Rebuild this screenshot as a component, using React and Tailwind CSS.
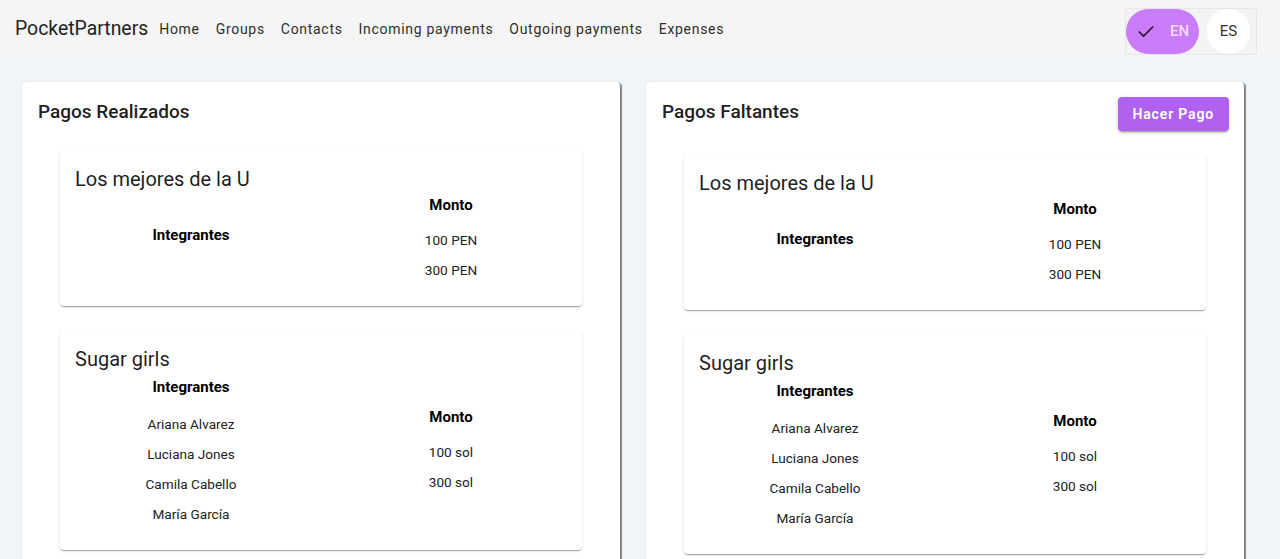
import { Check } from 'lucide-react'

const navLinks = ['Home', 'Groups', 'Contacts', 'Incoming payments', 'Outgoing payments', 'Expenses']

const groups = [
  {
    name: 'Los mejores de la U',
    members: [],
    amounts: ['100 PEN', '300 PEN'],
  },
  {
    name: 'Sugar girls',
    members: ['Ariana Alvarez', 'Luciana Jones', 'Camila Cabello', 'María García'],
    amounts: ['100 sol', '300 sol'],
  },
]

function GroupCard({ group }) {
  return (
    <div className="bg-white rounded-[4px] px-[15px] pt-4 pb-[21px] shadow-[0_2px_1px_-1px_rgba(0,0,0,0.2),0_1px_1px_0_rgba(0,0,0,0.14),0_1px_3px_0_rgba(0,0,0,0.12)]">
      <h3 className="text-[20px] leading-7 text-black/90">{group.name}</h3>
      <div className="grid grid-cols-2 gap-7 items-center">
        <div className="flex flex-col items-center pt-[2px]">
          <div className="h-6 leading-6 text-[15px] font-bold text-black">Integrantes</div>
          <div className="mt-[10px] flex flex-col">
            {group.members.map(m => (
              <div key={m} className="h-[30px] leading-[30px] text-[13.6px] text-[#222] text-center">{m}</div>
            ))}
          </div>
        </div>
        <div className="flex flex-col items-center">
          <div className="h-6 leading-6 text-[15px] font-bold text-black">Monto</div>
          <div className="mt-2 flex flex-col">
            {group.amounts.map(a => (
              <div key={a} className="h-[30px] leading-[30px] text-[13.6px] text-[#222] text-center">{a}</div>
            ))}
          </div>
        </div>
      </div>
    </div>
  )
}

function Panel({ title, action }) {
  return (
    <div className="flex-1 bg-white rounded-[4px] pt-[15px] pb-6 shadow-[2px_1px_1px_rgba(0,0,0,0.45),0_0_2px_rgba(0,0,0,0.12)]">
      <div className="flex items-start justify-between pl-4 pr-[15px]">
        <h2 className="text-[19px] leading-[30px] font-medium text-black/90">{title}</h2>
        {action}
      </div>
      <div className="mt-[22px] px-[38px] flex flex-col gap-[23px]">
        {groups.map(g => <GroupCard key={g.name} group={g} />)}
      </div>
    </div>
  )
}

export default function App() {
  return (
    <div className="min-h-screen bg-[#f1f4f8] font-['Roboto',sans-serif] text-black">
      <header className="h-[57px] bg-[#f5f5f5] flex items-start justify-between pl-[15px] pr-[23px]">
        <div className="flex items-center h-[57px]">
          <span className="text-[19.4px] text-[#222] mr-[3px]">PocketPartners</span>
          <nav className="flex items-center">
            {navLinks.map(link => (
              <a key={link} className="px-2 py-[6px] text-sm font-normal tracking-[0.05em] text-[#2e2e2e]">{link}</a>
            ))}
          </nav>
        </div>
        <div className="mt-2 flex items-center gap-2 border border-[#e6e6e6] rounded-[3px] bg-[#f3f3f3] pr-[6px] h-[47px]">
          <button className="h-[45px] w-[73px] rounded-full bg-[#c97cf7] flex items-center justify-center gap-[14px] text-[15px] text-[#f3dcff] font-medium">
            <Check size={20} strokeWidth={2} className="text-[#2a1236]" />
            EN
          </button>
          <button className="h-[45px] w-[43px] rounded-full bg-white flex items-center justify-center text-[15px] text-[#333]">
            ES
          </button>
        </div>
      </header>
      <main className="flex gap-[26px] pl-[22px] pr-[36px] pt-[25px] pb-6">
        <Panel title="Pagos Realizados" />
        <Panel
          title="Pagos Faltantes"
          action={
            <button className="h-[34px] px-[15px] rounded-[4px] bg-[#b061f0] text-white text-sm font-semibold tracking-[0.06em] shadow-[0_3px_1px_-2px_rgba(0,0,0,0.2),0_2px_2px_0_rgba(0,0,0,0.14),0_1px_5px_0_rgba(0,0,0,0.12)]">
              Hacer Pago
            </button>
          }
        />
      </main>
    </div>
  )
}
